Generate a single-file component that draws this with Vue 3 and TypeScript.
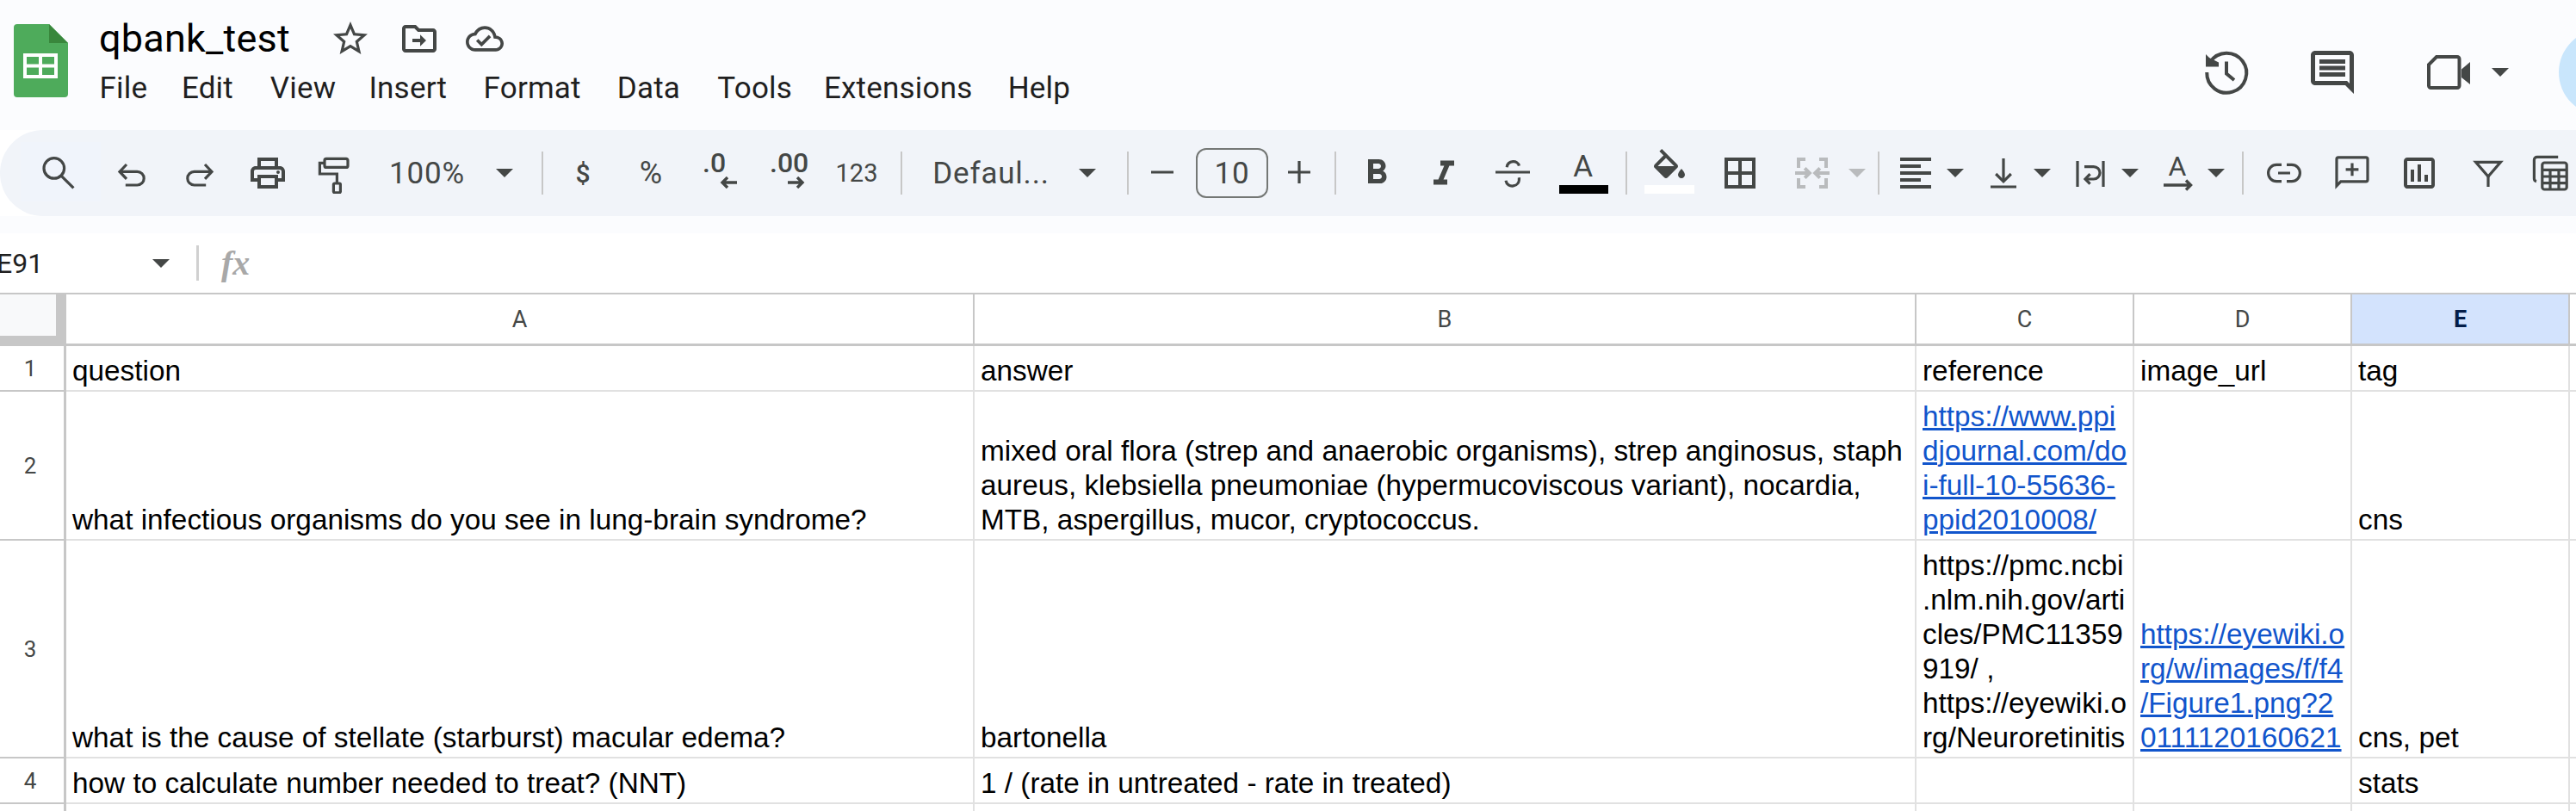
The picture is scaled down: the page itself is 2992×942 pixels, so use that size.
<script setup lang="ts">
type Item = {
  c: number
  w: number
  s?: string[]
  f?: string[]
  text?: string
  kind?: string
  off?: boolean
  sub?: string
}

const caret = (c: number, off = false): Item => ({ c, w: 20, kind: 'car', off })
const sep = (c: number): Item => ({ c, w: 2, kind: 'sep' })

const raw: Item[] = [
  { c: 69, w: 48, s: ['M15.3 9.2a5.9 5.9 0 1 1-11.8 0a5.9 5.9 0 1 1 11.8 0', 'M13.4 13.4 20.7 20.7'] },
  { c: 154, w: 48, s: ['M9 7 5 11.2l4 4.2', 'M5 11.2h10.2a3.9 3.9 0 0 1 0 7.8H8.4'] },
  { c: 233, w: 48, s: ['M15 7l4 4.2-4 4.2', 'M19 11.2H8.8a3.9 3.9 0 0 0 0 7.8h6.8'] },
  { c: 312, w: 48, f: ['M19 8h-1V3H6v5H5c-1.66 0-3 1.34-3 3v6h4v4h12v-4h4v-6c0-1.66-1.34-3-3-3zM8 5h8v3H8V5zm8 12v2H8v-4h8v2zm2-2v-2H6v2H4v-4c0-.55.45-1 1-1h14c.55 0 1 .45 1 1v4h-2z', 'M17 11.5a1 1 0 1 0 2 0a1 1 0 1 0-2 0'] },
  { c: 388, w: 48, s: ['M8 3.7h11.5a1 1 0 0 1 1 1v3a1 1 0 0 1-1 1H8a1 1 0 0 1-1-1v-3a1 1 0 0 1 1-1z', 'M7 6.2H4.2v6.3h10v5.5', 'M12.8 18h2.8a.6.6 0 0 1 .6.6v4.2a.6.6 0 0 1-.6.6h-2.8a.6.6 0 0 1-.6-.6v-4.2a.6.6 0 0 1 .6-.6z'] },
  { c: 497, w: 96, text: '100%' },
  caret(587),
  sep(631),
  { c: 678, w: 30, text: '$', kind: 'sm' },
  { c: 757, w: 40, text: '%', kind: 'pct' },
  { c: 837, w: 40, text: '.0', kind: 'dec', sub: 'left' },
  { c: 915.5, w: 41, text: '.00', kind: 'dec', sub: 'right' },
  { c: 996, w: 46, text: '123', kind: 'num' },
  sep(1047.5),
  { c: 1152, w: 134, text: 'Defaul...' },
  caret(1264),
  sep(1311),
  { c: 1351, w: 48, s: ['M5.5 11.5h13'] },
  { c: 1432, w: 84, text: '10', kind: 'box' },
  { c: 1510, w: 48, s: ['M5.5 11.5h13', 'M12 5v13'] },
  sep(1552),
  { c: 1600, w: 48, f: ['M15.6 10.79c.97-.67 1.65-1.77 1.65-2.79 0-2.26-1.75-4-4-4H7v14h7.04c2.09 0 3.71-1.7 3.71-3.79 0-1.52-.86-2.82-2.15-3.42zM10 6.5h3c.83 0 1.5.67 1.5 1.5s-.67 1.5-1.5 1.5h-3v-3zm3.5 9H10v-3h3.5c.83 0 1.5.67 1.5 1.5s-.67 1.5-1.5 1.5z'] },
  { c: 1678, w: 48, f: ['M10 4.8v3h2.21l-3.42 8H6v3h8v-3h-2.21l3.42-8H18v-3z'] },
  { c: 1758, w: 48, s: ['M2 11.5h20', 'M8.6 8.6C9.2 4.4 15 4.4 15.7 7.8', 'M15.7 14.6C16.4 20.6 8.7 21 8 16.4'] },
  { c: 1840, w: 57, text: 'A', kind: 'swatch-black' },
  sep(1890),
  { c: 1940, w: 58, f: ['M16.56 8.94 7.62 0 6.21 1.41l2.38 2.38-5.15 5.15c-.59.59-.59 1.54 0 2.12l5.5 5.5c.29.29.68.44 1.06.44s.77-.15 1.06-.44l5.5-5.5c.59-.58.59-1.53 0-2.12zM5.21 10 10 5.21 14.79 10H5.21zM19 11.5s-2 2.17-2 3.5c0 1.1.9 2 2 2s2-.9 2-2c0-1.33-2-3.5-2-3.5z'], kind: 'swatch-white' },
  { c: 2022, w: 48, f: ['M3 3v18h18V3H3zm8 16H5v-6h6v6zm0-8H5V5h6v6zm8 8h-6v-6h6v6zm0-8h-6V5h6v6z'] },
  { c: 2106, w: 48, s: ['M8 4H4v5', 'M16 4H20v5', 'M8 20H4v-5', 'M16 20H20v-5', 'M2 12h8', 'M7.6 9.2l2.8 2.8-2.8 2.8', 'M22 12h-8', 'M16.4 9.2 13.6 12l2.8 2.8'], off: true },
  caret(2158, true),
  sep(2183),
  { c: 2226, w: 48, f: ['M15 15H3v2h12v-2zm0-8H3v2h12V7zM3 13h18v-2H3v2zm0 8h18v-2H3v2zM3 3v2h18V3H3z'] },
  caret(2272),
  { c: 2328, w: 48, s: ['M12 3.5v13', 'M7.6 12.5l4.4 4.4 4.4-4.4', 'M4.5 20h15'] },
  caret(2373),
  { c: 2429, w: 48, s: ['M4.5 5v15', 'M19.5 5v15', 'M8.5 8.3h5.4a3.6 3.6 0 0 1 0 7.2H9', 'M11.8 12.6 9 15.5l2.8 2.8'] },
  caret(2475),
  { c: 2532, w: 36, text: 'A', kind: 'rot' },
  caret(2575),
  sep(2606),
  { c: 2654, w: 48, s: ['M10.5 7.2H7.6a4.8 4.8 0 0 0 0 9.6h2.9', 'M13.5 7.2h2.9a4.8 4.8 0 0 1 0 9.6h-2.9', 'M8.5 12h7'] },
  { c: 2733, w: 48, s: ['M3 3.9a1 1 0 0 1 1-1h16a1 1 0 0 1 1 1v12a1 1 0 0 1-1 1H5.4L3 19.4z', 'M12 6.2v7.4', 'M8.3 9.9h7.4'] },
  { c: 2811, w: 48, f: ['M9 17H7v-7h2v7zm4 0h-2V7h2v10zm4 0h-2v-4h2v4zm2 2H5V5h14v14zm0-16H5c-1.1 0-2 .9-2 2v14c0 1.1.9 2 2 2h14c1.1 0 2-.9 2-2V5c0-1.1-.9-2-2-2z'] },
  { c: 2891, w: 48, s: ['M4.8 5.7h14.4L12 14z', 'M12 14v6'] },
  { c: 2963, w: 48, s: ['M4 16.8a1.7 1.7 0 0 1-1.3-1.7V4.4A1.7 1.7 0 0 1 4.4 2.7H16.6', 'M8.7 6h11.6a1.3 1.3 0 0 1 1.3 1.3v12.9a1.3 1.3 0 0 1-1.3 1.3H8.7a1.3 1.3 0 0 1-1.3-1.3V7.3A1.3 1.3 0 0 1 8.7 6z', 'M7.4 10.2h14.2', 'M7.4 14h14.2', 'M7.4 17.8h14.2', 'M12 10.2v11', 'M17 10.2v11'] }
]

const items = raw.map((it, i) => {
  const prevRight = i === 0 ? 1 : raw[i - 1].c + raw[i - 1].w / 2
  return { ...it, ml: it.c - it.w / 2 - prevRight }
})

const menu = [
  { t: 'File', w: 95.4 },
  { t: 'Edit', w: 102.8 },
  { t: 'View', w: 114.7 },
  { t: 'Insert', w: 133.2 },
  { t: 'Format', w: 155.2 },
  { t: 'Data', w: 116.6 },
  { t: 'Tools', w: 123.6 },
  { t: 'Extensions', w: 213.7 },
  { t: 'Help', w: 80 }
]

type Cell = { t: string; link?: boolean }
const rows: { n: string; cells: Cell[] }[] = [
  { n: '1', cells: [{ t: 'question' }, { t: 'answer' }, { t: 'reference' }, { t: 'image_url' }, { t: 'tag' }, { t: '' }] },
  {
    n: '2',
    cells: [
      { t: 'what infectious organisms do you see in lung-brain syndrome?' },
      { t: 'mixed oral flora (strep and anaerobic organisms), strep anginosus, staph\naureus, klebsiella pneumoniae (hypermucoviscous variant), nocardia,\nMTB, aspergillus, mucor, cryptococcus.' },
      { t: 'https://www.ppi\ndjournal.com/do\ni-full-10-55636-\nppid2010008/', link: true },
      { t: '' },
      { t: 'cns' },
      { t: '' }
    ]
  },
  {
    n: '3',
    cells: [
      { t: 'what is the cause of stellate (starburst) macular edema?' },
      { t: 'bartonella' },
      { t: 'https://pmc.ncbi\n.nlm.nih.gov/arti\ncles/PMC11359\n919/ ,\nhttps://eyewiki.o\nrg/Neuroretinitis' },
      { t: 'https://eyewiki.o\nrg/w/images/f/f4\n/Figure1.png?2\n0111120160621', link: true },
      { t: 'cns, pet' },
      { t: '' }
    ]
  },
  {
    n: '4',
    cells: [
      { t: 'how to calculate number needed to treat? (NNT)' },
      { t: '1 / (rate in untreated - rate in treated)' },
      { t: '' },
      { t: '' },
      { t: 'stats' },
      { t: '' }
    ]
  },
  { n: '', cells: [{ t: '' }, { t: '' }, { t: '' }, { t: '' }, { t: '' }, { t: '' }] }
]

const cols = ['A', 'B', 'C', 'D', 'E', '']
</script>

<template>
  <div class="page">
    <header class="top">
      <svg class="logo" viewBox="0 0 63 85">
        <path d="M4 0h37l22 22v59a4 4 0 0 1-4 4H4a4 4 0 0 1-4-4V4a4 4 0 0 1 4-4z" fill="#4eab5b" />
        <path d="M41 0l22 22H41z" fill="#39873c" />
        <path d="M11 34h40v29H11zM15 38v8.5h14V38zM33 38v8.5h14V38zM15 50.5V59h14v-8.5zM33 50.5V59h14v-8.5z" fill="#fff" fill-rule="evenodd" />
      </svg>
      <div class="titles">
        <div class="title-row">
          <span class="title">qbank_test</span>
          <svg class="t-star" viewBox="0 0 24 24"><path class="fi" d="M22 9.24l-7.19-.62L12 2 9.19 8.63 2 9.24l5.46 4.73L5.82 21 12 17.27 18.18 21l-1.63-7.03L22 9.24zM12 15.4l-3.76 2.27 1-4.28-3.32-2.88 4.38-.38L12 6.1l1.71 4.04 4.38.38-3.32 2.88 1 4.28L12 15.4z" /></svg>
          <svg class="t-folder" viewBox="0 0 24 24"><path class="fi" d="M20 6h-8l-2-2H4c-1.1 0-2 .9-2 2v12c0 1.1.9 2 2 2h16c1.1 0 2-.9 2-2V8c0-1.1-.9-2-2-2zm0 12H4V6h5.17l2 2H20v10z" /><path class="fi" d="M8 12h4.5V9.6l3.5 3.4-3.5 3.4V14H8z" /></svg>
          <svg class="t-cloud" viewBox="0 0 24 24"><path class="fi" d="M19.35 10.04C18.67 6.59 15.64 4 12 4 9.11 4 6.6 5.64 5.35 8.04 2.34 8.36 0 10.91 0 14c0 3.31 2.69 6 6 6h13c2.76 0 5-2.24 5-5 0-2.64-2.05-4.78-4.65-4.96zM19 18H6c-2.21 0-4-1.79-4-4 0-2.05 1.53-3.76 3.56-3.97l1.07-.11.5-.95C8.08 7.14 9.94 6 12 6c2.62 0 4.88 1.86 5.39 4.43l.3 1.5 1.53.11c1.56.1 2.78 1.41 2.78 2.96 0 1.65-1.35 3-3 3zm-9-3.82l-2.09-2.09L6.5 13.5 10 17l6.01-6.01-1.41-1.41z" /></svg>
        </div>
        <nav class="menu"><span v-for="m in menu" :key="m.t" :style="{ width: m.w + 'px' }">{{ m.t }}</span></nav>
      </div>
      <div class="actions">
        <svg class="a-icon" viewBox="0 0 24 24">
          <path class="st" d="M4.5 7.1A9.2 9.2 0 1 1 2.9 12" />
          <path class="st" d="M12 7v5.6l3.6 3" />
          <path class="fi" d="M2.4 3.6 4 5.2 8.4 7.4V9.4H2.4z" />
        </svg>
        <svg class="a-icon a-comment" viewBox="0 0 24 24">
          <path class="fi" d="M22 4c0-1.1-.9-2-2-2H4c-1.1 0-2 .9-2 2v12c0 1.1.9 2 2 2h14l4 4V4zm-2 13.17L18.83 16H4V4h16v13.17z" />
          <path class="fi" d="M6 12h12v2H6zM6 9h12v2H6zM6 6h12v2H6z" />
        </svg>
        <svg class="a-icon a-meet" viewBox="0 0 24 24">
          <path class="st" d="M6.4 4.8H16a1 1 0 0 1 1 1v12.4a1 1 0 0 1-1 1H3.8a1 1 0 0 1-1-1V8.4z" />
          <path class="fi" d="M18 10.6 22 7.2V17.6L18 14.4z" />
        </svg>
        <span class="caret a-caret"></span>
        <span class="avatar"></span>
      </div>
    </header>

    <div class="toolbar">
      <span class="hover"></span>
      <div
        v-for="(it, i) in items"
        :key="i"
        class="tool"
        :class="it.kind"
        :style="{ width: it.w + 'px', marginLeft: it.ml + 'px' }"
      >
        <template v-if="it.kind === 'car'"><span class="caret" :class="{ off: it.off }"></span></template>
        <template v-else-if="it.kind === 'dec'">
          <span class="dec-text">{{ it.text }}</span>
          <svg class="dec-arrow" viewBox="0 0 20 14">
            <path v-if="it.sub === 'left'" d="M20 7H3M9 1 3 7l6 6" />
            <path v-else d="M0 7h17M11 1l6 6-6 6" />
          </svg>
        </template>
        <template v-else-if="it.kind === 'rot'">
          <span class="rot-text">{{ it.text }}</span>
          <svg class="rot-arrow" viewBox="0 0 34 14"><path d="M0 7h31M26 1.5 31.5 7 26 12.5" /></svg>
        </template>
        <template v-else-if="it.kind === 'swatch-black'">
          <span class="sw-text">{{ it.text }}</span>
          <span class="bar black"></span>
        </template>
        <template v-else-if="it.kind === 'swatch-white'">
          <svg class="sw-icon" viewBox="0 0 24 21"><path v-for="d in it.f" :key="d" class="fi" :d="d" /></svg>
          <span class="bar white"></span>
        </template>
        <template v-else-if="it.text">{{ it.text }}</template>
        <svg v-else class="t-icon" :class="{ off: it.off }" viewBox="0 0 24 24">
          <path v-for="d in it.s" :key="d" class="st" :d="d" />
          <path v-for="d in it.f" :key="d" class="fi" :d="d" />
        </svg>
      </div>
    </div>

    <div class="band"></div>

    <div class="formula">
      <span class="name">E91</span>
      <span class="caret f-caret"></span>
      <span class="f-sep"></span>
      <span class="fx">fx</span>
    </div>

    <div class="sheet">
      <div class="corner"><span></span></div>
      <div v-for="c in cols" :key="c" class="colhead" :class="{ sel: c === 'E' }">{{ c }}</div>
      <template v-for="(r, ri) in rows" :key="ri">
        <div class="rowhead">{{ r.n }}</div>
        <div v-for="(c, j) in r.cells" :key="j" class="cell">
          <a v-if="c.link" class="lnk">{{ c.t }}</a>
          <span v-else>{{ c.t }}</span>
        </div>
      </template>
    </div>
  </div>
</template>

<style>
html, body { margin: 0; background: #fff; }
</style>

<style scoped>
.page { width: 2992px; height: 942px; overflow: hidden; background: #fff; font-family: Roboto, "Liberation Sans", sans-serif; }
.top { height: 151px; background: #fbfcfe; display: flex; align-items: flex-start; overflow: hidden; }
.logo { width: 63px; height: 85px; margin: 28px 0 0 16px; flex-shrink: 0; }
.titles { margin-left: 36px; padding-top: 18px; }
.title-row { display: flex; align-items: center; height: 54px; }
.title { font-size: 45px; color: #000; line-height: 54px; width: 222px; letter-spacing: .2px; white-space: nowrap; }
.t-star { width: 48px; height: 48px; margin-left: 46px; }
.t-folder { width: 48px; height: 48px; margin-left: 32px; }
.t-cloud { width: 44px; height: 44px; margin-left: 30px; }
.fi { fill: #444746; }
.st { fill: none; stroke: #444746; stroke-width: 1.6; }
.menu { display: flex; font-size: 35px; color: #1f1f1f; line-height: 42px; margin-top: 10px; margin-left: .5px; letter-spacing: .2px; }
.menu span { flex-shrink: 0; }
.actions { margin-left: auto; margin-right: -80px; padding-top: 34px; display: flex; align-items: center; flex-shrink: 0; }
.a-icon { width: 60px; height: 60px; flex-shrink: 0; }
.a-comment { margin-left: 63px; }
.a-meet { margin-left: 75px; }
.a-caret { margin-left: 20px; }
.avatar { width: 100px; height: 100px; border-radius: 50%; background: #c9e6fc; margin-left: 58px; flex-shrink: 0; }
.caret { display: block; width: 0; height: 0; border-left: 10px solid transparent; border-right: 10px solid transparent; border-top: 10px solid #444746; }
.caret.off { border-top-color: #b9bbbd; }

.toolbar { position: relative; height: 100px; background: #f1f4f9; border-radius: 50px 0 0 50px; display: flex; align-items: center; overflow: hidden; font-size: 35px; letter-spacing: .8px; color: #444746; }
.hover { position: absolute; left: 24px; top: 14px; width: 93px; height: 69px; background: #f0f4fb; }
.tool { position: relative; flex-shrink: 0; height: 58px; display: flex; align-items: center; justify-content: center; white-space: nowrap; }
.t-icon { width: 48px; height: 48px; flex-shrink: 0; }
.t-icon.off .st { stroke: #b9bbbd; stroke-width: 2; }
.sep { height: 50px; background: #c7c7c7; }
.sm { font-size: 30px; font-weight: 500; letter-spacing: 0; }
.pct { font-size: 36px; letter-spacing: 0; }
.num { font-size: 29px; letter-spacing: 0; }
.box { box-sizing: border-box; border: 2px solid #747775; border-radius: 12px; }
.dec { display: block; height: 48px; letter-spacing: 0; }
.dec-text { display: block; font-size: 32px; line-height: 30px; font-weight: 500; margin-top: -3px; }
.dec-arrow { display: block; width: 20px; height: 14px; margin: 1px 0 0 auto; }
.dec-arrow path, .rot-arrow path { fill: none; stroke: #444746; stroke-width: 3.4; }
.rot { display: block; height: 44px; letter-spacing: 0; }
.rot-text { display: block; font-size: 32px; line-height: 28px; text-align: center; margin-right: 4px; }
.rot-arrow { display: block; width: 34px; height: 14px; margin-top: 1px; }
.swatch-black, .swatch-white { display: flex; flex-direction: column; align-items: center; justify-content: flex-start; height: 52px; margin-bottom: 4px; }
.sw-text { font-size: 35px; line-height: 42px; height: 42px; }
.sw-icon { width: 48px; height: 42px; flex-shrink: 0; }
.bar { display: block; width: 100%; height: 10px; flex-shrink: 0; }
.bar.black { background: #000; }
.bar.white { background: #fff; }

.band { height: 20px; background: #fbfcfe; }
.formula { height: 69px; display: flex; align-items: center; background: #fff; }
.name { font-size: 32px; color: #1f1f1f; width: 52px; margin-left: -4px; }
.f-caret { margin-left: 129px; }
.f-sep { width: 3px; height: 41px; background: #d0d0d0; margin-left: 31px; }
.fx { font-family: "Liberation Serif", serif; font-style: italic; font-weight: 700; font-size: 40px; color: #a8a8a8; margin-left: 26px; line-height: 40px; }

.sheet { display: grid; grid-template-columns: 77px 1055px 1094px 253px 253px 253px 1fr; grid-template-rows: 60px 53px 173px 253px 53px 60px; border-top: 2px solid #c7c7c7; box-sizing: border-box; height: 464px; }
.corner { background: #c7c7c7; }
.corner span { display: block; width: 65px; height: 48px; background: #f8f9fa; }
.colhead { box-sizing: border-box; background: #fff; border-right: 2px solid #c7c7c7; border-bottom: 3px solid #c7c7c7; display: flex; align-items: center; justify-content: center; font-size: 27px; color: #444746; }
.colhead.sel { background: #d3e3fd; color: #041e49; font-weight: 700; }
.rowhead { box-sizing: border-box; border-right: 3px solid #c7c7c7; border-bottom: 2px solid #c7c7c7; display: flex; align-items: center; justify-content: center; font-size: 26px; color: #444746; padding-right: 4px; }
.cell { box-sizing: border-box; border-right: 2px solid #e1e1e1; border-bottom: 2px solid #e1e1e1; display: flex; align-items: flex-end; padding: 0 6px 2px 7px; font-family: "Liberation Sans", Arial, sans-serif; font-size: 33.33px; line-height: 40px; color: #000; white-space: pre-line; overflow: hidden; }
.lnk { color: #1155cc; text-decoration: underline; text-decoration-thickness: 3px; }
</style>
